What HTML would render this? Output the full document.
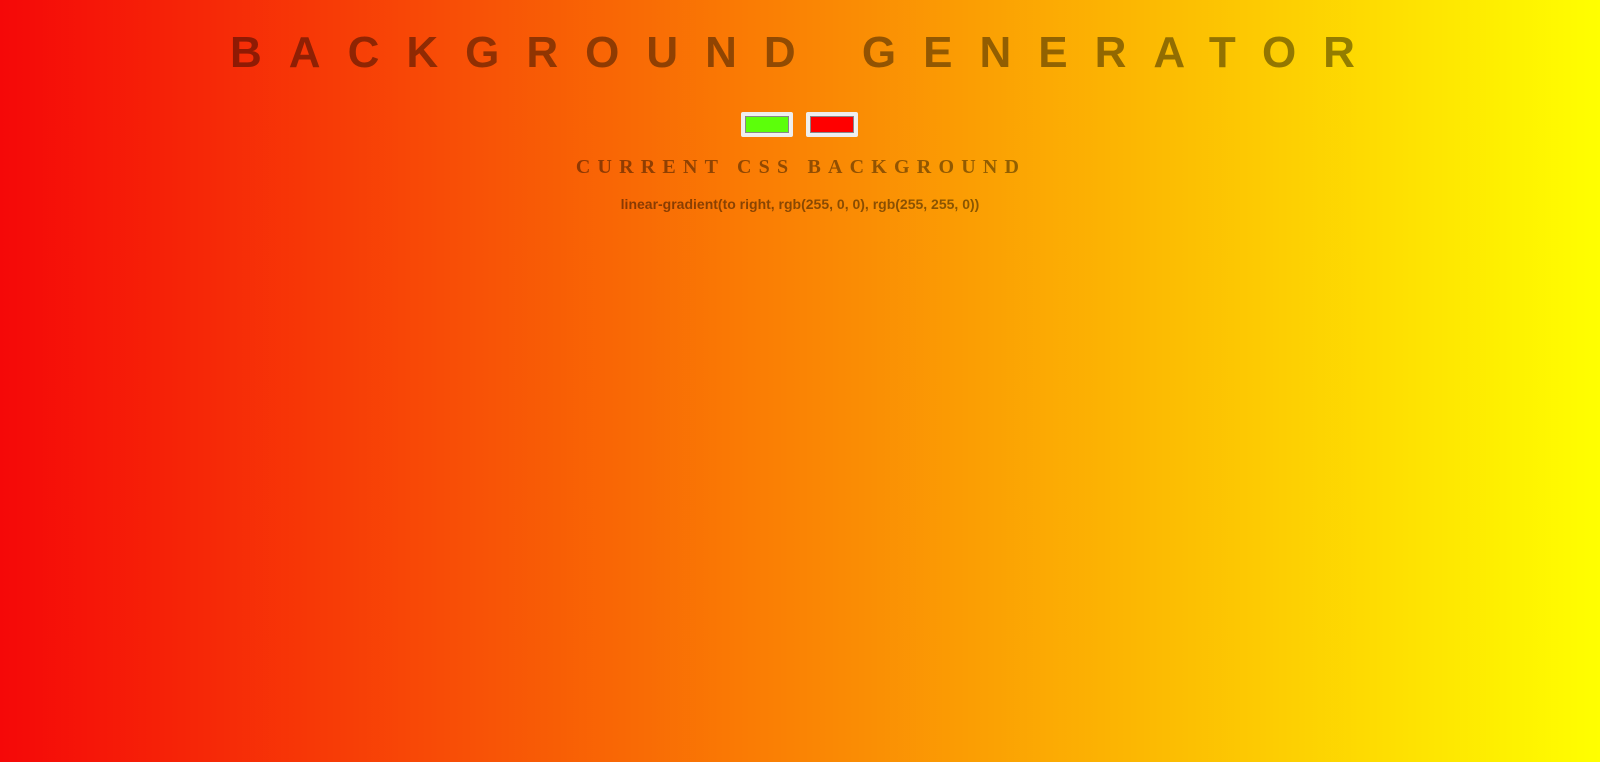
<!DOCTYPE html>
<html><head><meta charset="utf-8"><style>
html,body{margin:0;width:1600px;height:762px;overflow:hidden}
body{background:linear-gradient(to right,#f50808,#ffff00);font-family:"Liberation Sans",sans-serif;position:relative}
h1{position:absolute;left:0;top:28px;width:1600px;margin:0;text-align:center;font-size:44px;font-weight:bold;letter-spacing:27px;color:rgba(0,0,0,0.42);text-indent:12px;white-space:nowrap}
.sw{position:absolute;top:112px;width:48px;height:21px;border:2px solid #eee;border-radius:2px;background:#f0f0f0}
.sw div{position:absolute;left:2px;top:2px;right:2px;bottom:2px;border:1px solid #888}
h3{position:absolute;left:0;width:1600px;top:156px;margin:0;text-align:center;font-family:"Liberation Serif",serif;font-weight:bold;font-size:20px;letter-spacing:7.2px;color:rgba(0,0,0,0.42);text-indent:2px;white-space:nowrap}
p{position:absolute;left:0;width:1600px;top:196px;margin:0;text-align:center;font-weight:bold;font-size:14px;color:rgba(0,0,0,0.45);text-indent:0}
</style></head><body>
<h1>BACKGROUND GENERATOR</h1>
<div class="sw" style="left:741px"><div style="background:#5cff0a"></div></div>
<div class="sw" style="left:806px"><div style="background:#f00"></div></div>
<h3>CURRENT CSS BACKGROUND</h3>
<p>linear-gradient(to right, rgb(255, 0, 0), rgb(255, 255, 0))</p>
</body></html>
